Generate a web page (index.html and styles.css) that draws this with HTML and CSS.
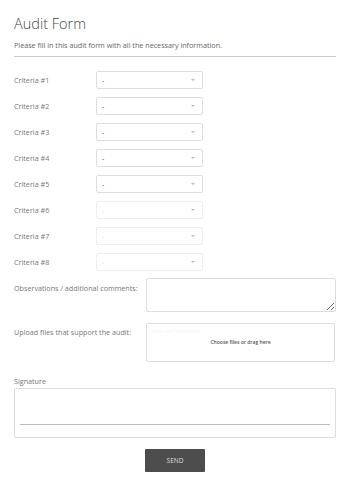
FILE: index.html
```html
<!DOCTYPE html>
<html lang="en">
<head>
    <meta charset="UTF-8">
    <title>Audit Form</title>
    <link rel="stylesheet" href="styles.css">
</head>
<body>
    <main class="form">
        <h1 class="form-title">Audit Form</h1>
        <p class="form-intro">Please fill in this audit form with all the necessary information.</p>
        <hr class="divider">

        <div class="field">
            <label class="field-label">Criteria #1</label>
            <div class="select"><span>-</span><i class="caret"></i></div>
        </div>
        <div class="field">
            <label class="field-label">Criteria #2</label>
            <div class="select"><span>-</span><i class="caret"></i></div>
        </div>
        <div class="field">
            <label class="field-label">Criteria #3</label>
            <div class="select"><span>-</span><i class="caret"></i></div>
        </div>
        <div class="field">
            <label class="field-label">Criteria #4</label>
            <div class="select"><span>-</span><i class="caret"></i></div>
        </div>
        <div class="field">
            <label class="field-label">Criteria #5</label>
            <div class="select"><span>-</span><i class="caret"></i></div>
        </div>
        <div class="field">
            <label class="field-label">Criteria #6</label>
            <div class="select faded"><span>-</span><i class="caret"></i></div>
        </div>
        <div class="field">
            <label class="field-label">Criteria #7</label>
            <div class="select faded"><span>-</span><i class="caret"></i></div>
        </div>
        <div class="field">
            <label class="field-label">Criteria #8</label>
            <div class="select faded"><span>-</span><i class="caret"></i></div>
        </div>

        <div class="field wide top">
            <label class="field-label">Observations / additional comments:</label>
            <textarea class="comments"></textarea>
        </div>

        <div class="field wide top upload-row">
            <label class="field-label">Upload files that support the audit:</label>
            <div class="upload">
                <span class="upload-ghost">Upload files here</span>
                <span class="upload-text">Choose files or drag here</span>
            </div>
        </div>

        <div class="signature-block">
            <label class="sig-label">Signature</label>
            <div class="signature"><div class="sig-line"></div></div>
        </div>

        <div class="actions">
            <button class="send">SEND</button>
        </div>
    </main>
</body>
</html>
```

FILE: styles.css
```css
body {
    margin: 0;
    background-color: white;
    font-family: "Open Sans", "Liberation Sans", sans-serif;
    color: #555;
}

.form {
    padding: 14px 14px 0 14px;
}

.form-title {
    margin: 0;
    font-size: 14.5px;
    font-weight: 300;
    line-height: 20px;
    color: #444;
}

.form-intro {
    margin: 6px 0 0 0;
    font-size: 7.2px;
    line-height: 10px;
    color: #666;
}

.divider {
    margin: 6px 0 14px 0;
    border: none;
    border-top: 1px solid #ccc;
}

.field {
    display: flex;
    align-items: center;
    margin-bottom: 8px;
}

.field-label {
    width: 82px;
    flex-shrink: 0;
    font-size: 7.2px;
    color: #777;
}

.select {
    box-sizing: border-box;
    width: 107px;
    height: 18px;
    border: 1px solid #ddd;
    border-radius: 2px;
    display: flex;
    align-items: center;
    justify-content: space-between;
    padding: 0 7px 0 5px;
    font-size: 7px;
    color: #444;
}

.select.faded {
    border-color: #eee;
    color: #ddd;
}

.caret {
    width: 0;
    height: 0;
    border-left: 2.5px solid transparent;
    border-right: 2.5px solid transparent;
    border-top: 2.5px solid #bbb;
}

.faded .caret {
    border-top-color: #bbb;
}

.field.wide .field-label {
    width: 132px;
}

.field.top {
    align-items: flex-start;
}

.field.top .field-label {
    padding-top: 4px;
}

.comments {
    box-sizing: border-box;
    width: 190px;
    height: 34px;
    margin: -1px 0 0 0;
    border: 1px solid #ddd;
    border-radius: 2px;
    resize: vertical;
}

.upload-row {
    margin-top: 11px;
}

.upload {
    box-sizing: border-box;
    width: 189px;
    height: 39px;
    border: 1px solid #ddd;
    border-radius: 2px;
    position: relative;
    display: flex;
    align-items: center;
    justify-content: center;
}

.upload-ghost {
    position: absolute;
    top: 3px;
    left: 5px;
    font-size: 6px;
    color: #f3f3f3;
}

.upload-text {
    font-size: 5px;
    font-weight: 600;
    color: #555;
    margin-top: -2px;
}

.signature-block {
    margin-top: 14px;
}

.sig-label {
    display: block;
    font-size: 7.2px;
    color: #777;
    margin-bottom: 2px;
}

.signature {
    box-sizing: border-box;
    height: 50px;
    border: 1px solid #ddd;
    border-radius: 2px;
    padding: 35px 5px 0 5px;
}

.sig-line {
    border-top: 1px solid #bbb;
}

.actions {
    display: flex;
    justify-content: center;
    padding-top: 11px;
}

.send {
    width: 60px;
    height: 23px;
    background-color: #4d4d4d;
    border: none;
    border-radius: 1px;
    color: #ddd;
    font-family: "Open Sans", "Liberation Sans", sans-serif;
    font-size: 6.5px;
}
```
